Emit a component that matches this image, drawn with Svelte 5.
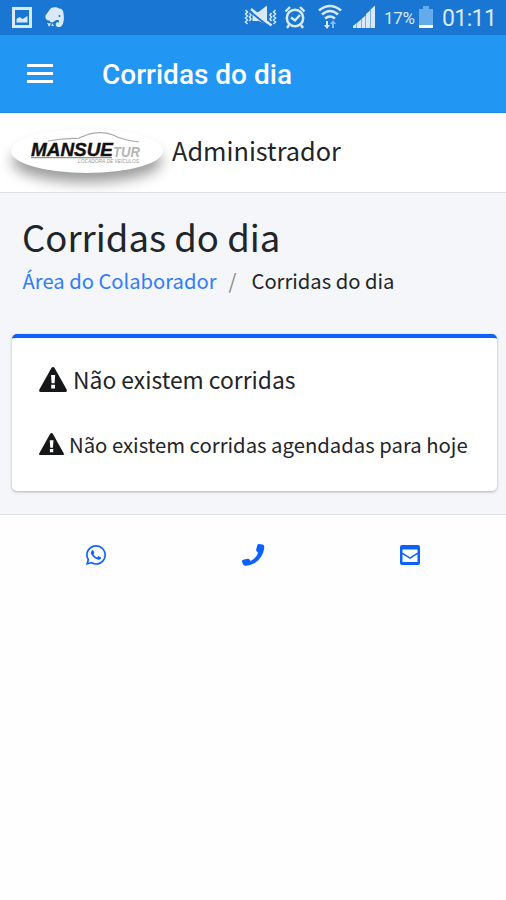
<script>
  const whatsapp = 'M380.9 97.1C339 55.1 283.2 32 223.9 32c-122.4 0-222 99.6-222 222 0 39.1 10.2 77.3 29.6 111L0 480l117.7-30.9c32.4 17.7 68.9 27 106.1 27h.1c122.3 0 224.1-99.6 224.1-222 0-59.3-25.2-115-67.1-157zm-157 341.6c-33.2 0-65.7-8.9-94-25.7l-6.7-4-69.8 18.3L72 359.2l-4.4-7c-18.5-29.4-28.2-63.3-28.2-98.2 0-101.7 82.8-184.5 184.6-184.5 49.3 0 95.6 19.2 130.4 54.1 34.8 34.9 56.2 81.2 56.1 130.5 0 101.8-84.9 184.6-186.6 184.6zm101.2-138.2c-5.5-2.8-32.8-16.2-37.9-18-5.1-1.9-8.8-2.8-12.5 2.8-3.7 5.6-14.3 18-17.6 21.8-3.2 3.7-6.5 4.2-12 1.4-32.6-16.3-54-29.1-75.5-66-5.7-9.8 5.7-9.1 16.3-30.3 1.8-3.7.9-6.9-.5-9.7-1.4-2.8-12.5-30.1-17.1-41.2-4.5-10.8-9.1-9.3-12.5-9.5-3.2-.2-6.9-.2-10.6-.2-3.7 0-9.7 1.4-14.8 6.9-5.1 5.6-19.4 19-19.4 46.3 0 27.3 19.9 53.7 22.6 57.4 2.8 3.7 39.1 59.7 94.8 83.8 35.2 15.2 49 16.5 66.6 13.9 10.7-1.6 32.8-13.4 37.4-26.4 4.6-13 4.6-24.1 3.2-26.4-1.3-2.5-5-3.9-10.5-6.6z';
</script>

{#snippet warning(width, height)}
  <svg {width} {height} viewBox="0 0 28 25">
    <path d="M14 0q1 0 1.600 1L27.500 22.300Q28.600 25 26.300 25H1.700Q-.6 25 .5 22.300L12.400 1Q13 0 14 0z" />
    <path fill="#fff" d="M12 8h4.200l-.6 8.300h-3zM12.200 17.800h3.800v3.700h-3.800z" />
  </svg>
{/snippet}

<div class="screen">
  <div class="status">
    <svg class="left" width="80" height="35" viewBox="0 0 80 35">
      <path fill="#d9e9fa" fill-rule="evenodd" d="M12 7H32V28H12ZM15 10V25H29V10Z" />
      <path fill="#d9e9fa" d="M16.500 22.500V19l3-2 3 2 5-3v6.500z" />
      <path fill="#d9e9fa" d="M50.500 8.500c3-2 6.500-1.500 8.500 0 3 0 4.500 2 4.500 5 1 5 0 9-1 11-1 3-5.500 3.500-6.500 1-1-3 1-4 3-3v-2c-2-1-4 0-5 1-2 1.500-4 1-4.500-1-3 0-4.500-2-4-5z" />
      <path fill="#d9e9fa" d="M47 23l4 .5-2 3.500-1-2.500zM52 23l2 3h-2.500z" />
      <circle cx="59.500" cy="16" r="1" fill="#1976d2" />
    </svg>
    <svg class="right" width="136" height="35" viewBox="242 0 136 35">
      <g fill="none" stroke="#d9e9fa" stroke-width="1.8">
        <path d="M245.500 10l2 2-2 2 2 2-2 2 2 2-2 2 2 2M249.500 13l1.500 2-1.500 2 1.500 2-1.500 2M271.500 13l-1.500 2 1.500 2-1.500 2 1.500 2M275.500 10l-2 2 2 2-2 2 2 2-2 2 2 2-2 2" stroke-width="1.500" />
        <circle cx="295" cy="18" r="8.2" stroke-width="2.5" />
        <path d="M285.500 11.500l4.500-4.500M304.500 11.500l-4.500-4.500M289 25l-2 3M301 25l2 3M291 17.500l4 3 5-5.500" stroke-width="2.4" />
        <path d="M319 10.500q11-9 22 0M322 14.500q8-7 16 0M325 18.500q5-4 10 0" stroke-width="2.6" />
      </g>
      <path fill="#d9e9fa" d="M252.500 12h6l8.500-6.500V25l-8-4h-6.500z" />
      <path d="M250 11.500l20 16" stroke="#1976d2" stroke-width="2" />
      <path d="M251 9l20.500 16.500" stroke="#d9e9fa" stroke-width="2.400" />
      <path fill="#d9e9fa" d="M326 21h2v4h2l-3 4-3-4h2z" />
      <path fill="#85bdf0" d="M332 28h2v-4h2l-3-4-3 4h2z" />
      <path fill="#d9e9fa" d="M353 28v-2l3.500-3v5zM357 28v-5l4-3.500V28zM361.500 28v-9l4-3.500V28zM366 28V14l4-3.500V28zM370.500 28V9.500l4.500-4v22.500z" />
    </svg>
    <span class="percent">17%</span>
    <svg class="battery" width="14" height="35" viewBox="0 0 14 35">
      <path fill="#64abeb" d="M4 6h6v3h4v17H0V9h4z" /><path fill="#fff" d="M0 25h14v3H0z" />
    </svg>
    <span class="clock">01:11</span>
  </div>

  <header class="appbar">
    <div class="menu"><i></i><i></i><i></i></div>
    <span>Corridas do dia</span>
  </header>

  <div class="userbar">
    <div class="logo">
      <svg width="152" height="44" viewBox="11 129 152 44">
        <path d="M48 141q16-3 30-2.500c9-4 21-9 35-3.500q9 5 26 7" fill="none" stroke="#aaa" stroke-width="1.2" />
        <text x="31" y="156" class="brand" textLength="82" lengthAdjust="spacingAndGlyphs">MANSUE</text>
        <text x="113" y="157" class="tur" textLength="27" lengthAdjust="spacingAndGlyphs">TUR</text>
        <path d="M31 157.700H112" stroke="#777" stroke-width="1" />
        <text x="78" y="163" class="tag" textLength="61" lengthAdjust="spacingAndGlyphs">LOCADORA DE VEÍCULOS</text>
      </svg>
    </div>
    <span class="user">Administrador</span>
  </div>

  <main>
    <h1>Corridas do dia</h1>
    <nav><a href="#area">Área do Colaborador</a><span class="slash">/</span><span class="current">Corridas do dia</span></nav>
    <section class="card">
      <div class="row first">
        {@render warning(28, 25)}
        <span>Não existem corridas</span>
      </div>
      <div class="row second">
        {@render warning(25, 22.5)}
        <span>Não existem corridas agendadas para hoje</span>
      </div>
    </section>
  </main>

  <footer>
    <svg width="20" height="22" viewBox="0 16 448 480"><path d={whatsapp} /></svg>
    <svg width="24" height="24" viewBox="0 0 24 24"><path d="M17.800 1l3.800.6q1.700.3 1.700 2.400C22.700 13.500 15.500 21.800 5.500 22.700q-2.800.2-3.400-1.200L1 18.600q-.3-1.300 1.100-1.800l4.300-1.100q1.400-.3 2.200.8l.9 1.500q5.600-2.400 7.600-8.300l-1.300-1.300q-1-1-.5-2.300l1-3.900q.4-1.300 1.500-1.200z" /></svg>
    <svg width="20" height="20" viewBox="0 0 20 20"><path fill-rule="evenodd" d="M2 0h16q2 0 2 2v16q0 2-2 2H2q-2 0-2-2V2Q0 0 2 0zM2.500 4.500v3l7.500 4.700 7.500-4.700v-3zM2.500 9.300V17h15V9.300L10 13.900z" /></svg>
  </footer>
</div>

<style>
  :global(body) { background: #fff; }
  .screen { width: 506px; height: 900px; overflow: hidden; background: #fefefe; color: #212529; font-family: "Noto Sans CJK JP", "Noto Sans", sans-serif; }
  svg { display: block; flex: none; }
  span, h1, a { white-space: nowrap; }
  .status { height: 35px; background: #1976d2; display: flex; align-items: center; color: #d9e9fa; font-family: Roboto, sans-serif; }
  .right { margin-left: 162px; }
  .percent { width: 36px; margin-left: 6px; font-size: 17px; line-height: 35px; letter-spacing: -0.3px; padding-top: 1px; }
  .battery { margin-left: -1px; }
  .clock { margin-left: 9px; font-size: 23px; letter-spacing: -0.6px; line-height: 35px; padding-top: 2px; }
  .appbar { height: 78px; box-sizing: border-box; border-bottom: 1px solid #1e88e5; background: #2196f3; display: flex; align-items: center; color: #fff; font: 500 28px/78px Roboto, sans-serif; }
  .appbar span { padding-top: 2px; }
  .menu { width: 26px; height: 19px; margin: 0 49px 0 27px; display: flex; flex-direction: column; justify-content: space-between; }
  .menu i { height: 3px; background: #fff; }
  .userbar { height: 80px; box-sizing: border-box; border-bottom: 1px solid #dee2e6; background: #fff; display: flex; align-items: center; overflow: hidden; }
  .logo { width: 152px; height: 44px; margin: 0 9px 4px 11px; border-radius: 50%; background: #fff; box-shadow: 0 10px 14px -1px rgba(0, 0, 0, .4); }
  .brand { font: italic 900 18px "Liberation Sans", sans-serif; fill: #111; stroke: #111; stroke-width: .4px; }
  .tur { font: italic 700 14px "Liberation Sans", sans-serif; fill: #b5b5b5; }
  .tag { font: italic 5px "Liberation Sans", sans-serif; fill: #999; }
  .user { font-size: 25.300px; line-height: 40px; padding-bottom: 6px; }
  main { height: 322px; box-sizing: border-box; padding: 23px 9px 0 12px; background: #f4f6f9; border-bottom: 1px solid #dee2e6; }
  h1 { margin: 0 0 0 10px; font-size: 36.500px; font-weight: 400; line-height: 42px; }
  nav { display: flex; margin: 2px 0 0 10.500px; height: 34px; font-size: 20.200px; line-height: 42px; }
  a { color: #2f7dfb; text-decoration: none; }
  .slash { color: #888; margin: 0 15px 0 12px; }
  .card { margin-top: 40px; height: 157px; box-sizing: border-box; border-top: 4px solid #0d62fe; border-radius: 5px; background: #fff; box-shadow: 0 1px 3px rgba(0, 0, 0, .28); padding: 21px 0 0 27px; }
  .row { display: flex; align-items: center; height: 40px; fill: #151719; }
  .first { font-size: 22.850px; gap: 6px; }
  .second { font-size: 20.300px; gap: 5px; margin-top: 25px; }
  footer { height: 80px; display: flex; align-items: center; justify-content: space-between; padding: 0 86px; fill: #0d62fe; }
</style>
